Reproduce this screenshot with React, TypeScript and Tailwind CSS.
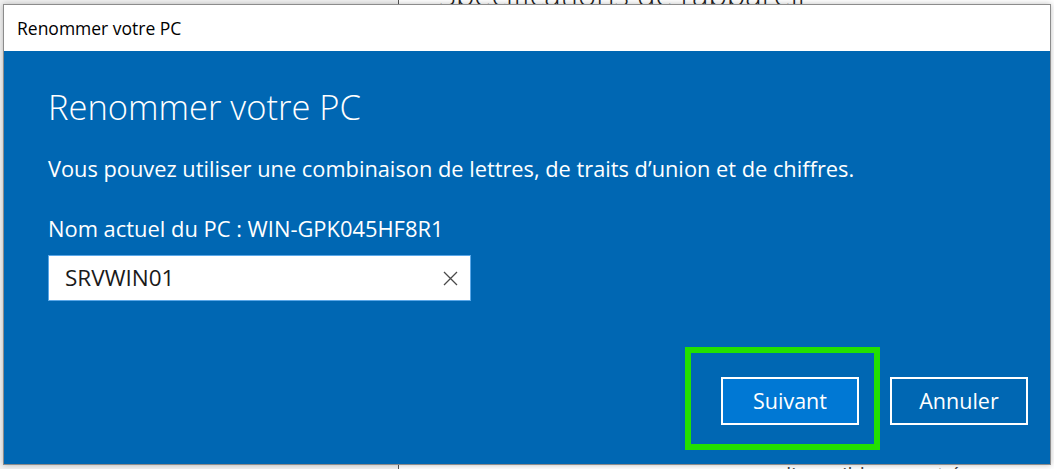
const font = { fontFamily: '"Open Sans", "Noto Sans", sans-serif' };

function Background() {
  return (
    <div className="absolute inset-0 flex">
      {/* left settings nav */}
      <div className="w-[399px] bg-[#f2f2f2] border-r border-[#555]" />
      {/* right content */}
      <div className="flex-1 bg-white flex flex-col">
        <div className="-mt-[26px] pl-[40px] text-[31px] leading-[40px] text-[#222] font-light">
          Spécifications de l’appareil
        </div>
        <div className="flex-1" />
        <div className="pl-[380px] -mb-[18px] text-[20px] leading-[24px] text-[#444]">
          disponible sur cet écran
        </div>
      </div>
    </div>
  );
}

function ClearIcon() {
  return (
    <svg width="15" height="15" viewBox="0 0 15 15" className="text-[#4a4a4a]">
      <path d="M1 1 L14 14 M14 1 L1 14" stroke="currentColor" strokeWidth="1.3" fill="none" />
    </svg>
  );
}

function RenameDialog() {
  return (
    <div className="absolute left-[3px] top-[4px] w-[1048px] h-[461px] border border-[#8c8c8c] flex flex-col shadow-[0_0_6px_rgba(0,0,0,0.25)]">
      {/* title bar */}
      <div className="h-[46px] bg-white flex items-center pl-[13px] text-[17.5px] text-black">
        Renommer votre PC
      </div>

      {/* body */}
      <div className="flex-1 bg-[#0067b3] flex flex-col pl-[44px] pr-[22px] text-white">
        <h1 className="mt-[34px] text-[34.5px] leading-[44px] font-light">
          Renommer votre PC
        </h1>
        <p className="mt-[25px] text-[21.8px] leading-[30px]">
          Vous pouvez utiliser une combinaison de lettres, de traits d’union et de chiffres.
        </p>
        <p className="mt-[30px] text-[21.9px] leading-[30px]">
          Nom actuel du PC : WIN-GPK045HF8R1
        </p>
        <div className="mt-[11px] w-[423px] h-[46px] bg-white border border-[#5aa7e8] flex items-center pl-[16px] pr-[12px]">
          <span className="flex-1 text-[22.5px] text-[#1a1a1a]">SRVWIN01</span>
          <ClearIcon />
        </div>

        <div className="flex-1" />

        <div className="flex justify-end gap-[31px] mb-[39px]">
          <button className="relative w-[138px] h-[48px] bg-[#0078d4] border-2 border-white text-[21.5px] text-white">
            Suivant
            {/* highlight annotation */}
            <span className="absolute -left-[38px] -top-[32px] w-[195px] h-[103px] border-[6px] border-[#22e000]" />
          </button>
          <button className="w-[138px] h-[48px] border-2 border-white text-[21.5px] text-white">
            Annuler
          </button>
        </div>
      </div>
    </div>
  );
}

export default function App() {
  return (
    <div className="relative w-[1054px] h-[469px] overflow-hidden" style={font}>
      <Background />
      <RenameDialog />
    </div>
  );
}
